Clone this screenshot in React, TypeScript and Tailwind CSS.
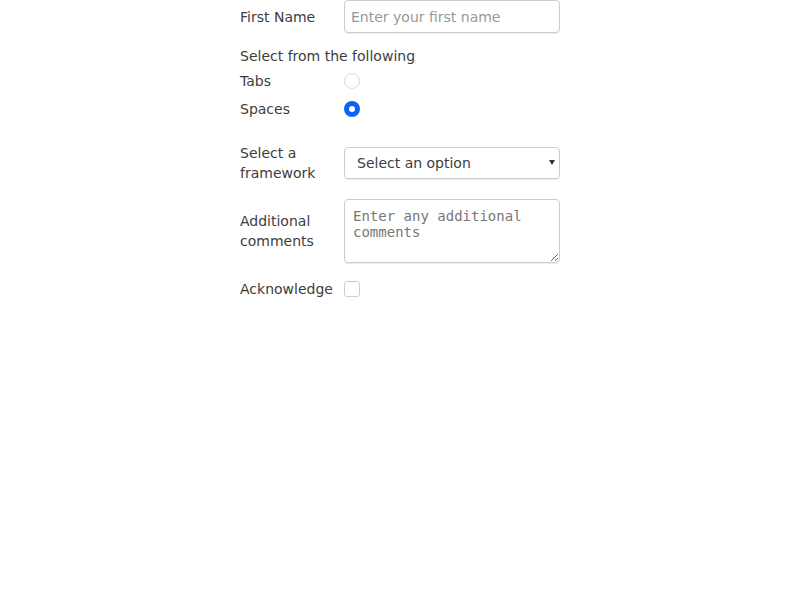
export default function App() {
  return (
    <div className="min-h-screen bg-white text-[14px] leading-5 text-[#3d3d3d] [font-family:'DejaVu_Sans',sans-serif]">
      <form className="mx-auto flex w-[320px] flex-col">
        <div className="flex items-center gap-2">
          <label htmlFor="firstName" className="w-24 shrink-0">First Name</label>
          <input
            id="firstName"
            type="text"
            placeholder="Enter your first name"
            className="h-[33px] w-[216px] rounded border border-[#ccc] px-[6px] shadow-[0_1px_1px_rgba(0,0,0,0.08)] outline-none placeholder:text-[#999]"
          />
        </div>

        <div className="mt-[13px]">
          <div>Select from the following</div>
          <div className="mt-[5px] flex items-center gap-2">
            <label htmlFor="tabs" className="w-24 shrink-0">Tabs</label>
            <input
              id="tabs"
              type="radio"
              name="indent"
              className="h-4 w-4 appearance-none rounded-full border border-[#ddd] bg-white"
            />
          </div>
          <div className="mt-2 flex items-center gap-2">
            <label htmlFor="spaces" className="w-24 shrink-0">Spaces</label>
            <input
              id="spaces"
              type="radio"
              name="indent"
              defaultChecked
              className="h-4 w-4 appearance-none rounded-full border-[5px] border-[#0b63f6] bg-white"
            />
          </div>
        </div>

        <div className="mt-6 flex items-center gap-2">
          <label htmlFor="framework" className="w-24 shrink-0">Select a framework</label>
          <div className="relative w-[216px]">
            <select
              id="framework"
              defaultValue=""
              className="h-8 w-full appearance-none rounded border border-[#ccc] bg-white px-3 text-[#3d3d3d] shadow-[0_1px_1px_rgba(0,0,0,0.08)] outline-none"
            >
              <option value="" disabled>Select an option</option>
              <option value="react">React</option>
              <option value="vue">Vue</option>
            </select>
            <span className="pointer-events-none absolute right-[5px] top-[13px] h-0 w-0 border-x-[3px] border-t-[5px] border-x-transparent border-t-[#333]" />
          </div>
        </div>

        <div className="mt-4 flex items-center gap-2">
          <label htmlFor="comments" className="w-24 shrink-0">Additional comments</label>
          <textarea
            id="comments"
            placeholder="Enter any additional comments"
            className="h-16 w-[216px] rounded border border-[#ccc] px-2 pt-2 pb-[6px] leading-4 shadow-[0_1px_1px_rgba(0,0,0,0.08)] outline-none [font-family:'DejaVu_Sans_Mono',monospace] placeholder:text-[#777]"
          />
        </div>

        <div className="mt-4 flex items-center gap-2">
          <label htmlFor="ack" className="w-24 shrink-0">Acknowledge</label>
          <input
            id="ack"
            type="checkbox"
            className="h-4 w-4 appearance-none rounded-[3px] border border-[#ccc] bg-white"
          />
        </div>
      </form>
    </div>
  );
}
